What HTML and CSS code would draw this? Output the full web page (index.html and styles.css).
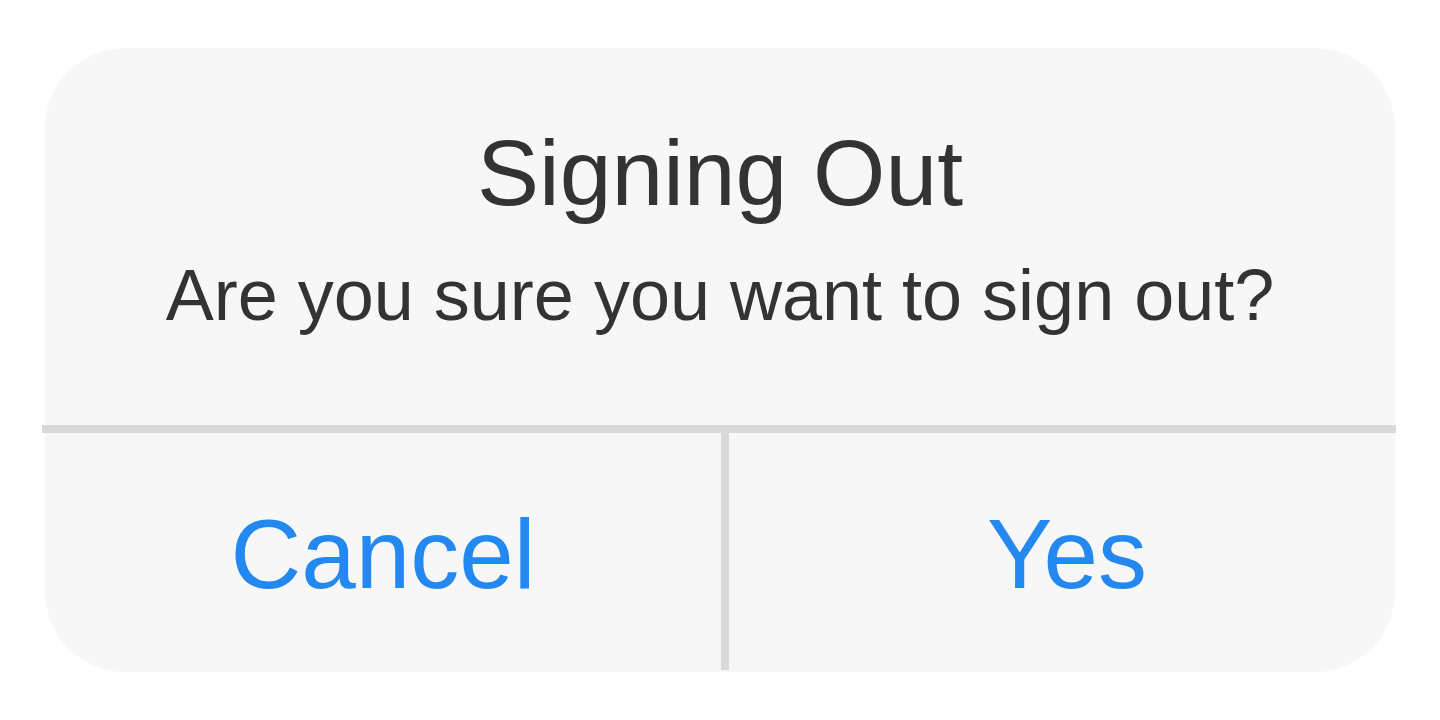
FILE: index.html
```html
<!DOCTYPE html>
<html lang="en">
<head>
  <meta charset="UTF-8" />
  <meta name="viewport" content="width=device-width, initial-scale=1.0"/>
  <title>Signing Out</title>
  <link rel="stylesheet" href="styles.css">
</head>
<body>

  <div class="dialog">
    <div class="dialog-body">
      <h1 class="dialog-title">Signing Out</h1>
      <p class="dialog-message">Are you sure you want to sign out?</p>
    </div>
    <div class="divider"></div>
    <div class="dialog-actions">
      <button class="action action-cancel">Cancel</button>
      <div class="action-divider"></div>
      <button class="action action-confirm">Yes</button>
    </div>
  </div>

</body>
</html>
```

FILE: styles.css
```css
body {
  margin: 0;
  background-color: #ffffff;
  font-family: 'Liberation Sans', Arial, Helvetica, sans-serif;
}

.dialog {
  width: 1350px;
  height: 624px;
  margin: 48px 45px 0;
  background: #f7f7f7;
  border-radius: 80px;
  display: flex;
  flex-direction: column;
}

.dialog-body {
  padding: 79px 0 94px;
  text-align: center;
  color: #333333;
}

.dialog-title {
  margin: 0;
  font-size: 93px;
  font-weight: normal;
  line-height: 1;
}

.dialog-message {
  margin: 39px 0 0;
  font-size: 72px;
  line-height: 1;
}

.divider {
  height: 8px;
  margin: 0 -1px 0 -3px;
  background-color: #d9d9d9;
}

.dialog-actions {
  display: flex;
  height: 239px;
}

.action {
  border: none;
  background: none;
  padding: 0 0 0;
  margin: 0;
  font-family: inherit;
  font-size: 98px;
  line-height: 1;
  color: #2388f0;
  cursor: pointer;
  display: flex;
  align-items: center;
  justify-content: center;
  padding-top: 3px;
}

.action-cancel {
  width: 676px;
}

.action-confirm {
  flex: 1;
  padding-left: 10px;
}

.action-divider {
  width: 8px;
  margin: -4px 0 2px;
  background-color: #d9d9d9;
}
```
